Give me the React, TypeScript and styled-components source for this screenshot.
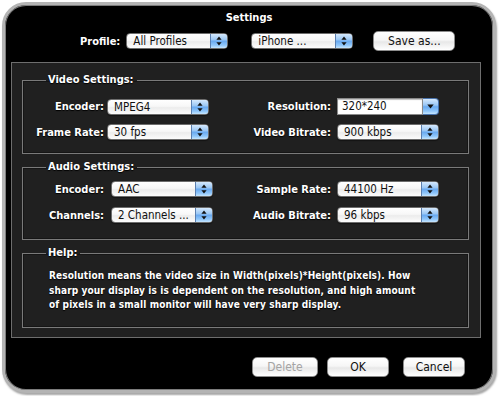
import React from 'react';
import styled, { createGlobalStyle } from 'styled-components';

const GlobalStyle = createGlobalStyle`
  html, body {
    margin: 0;
    padding: 0;
    background: #fff;
  }
  body {
    font-family: "DejaVu Sans Condensed", "DejaVu Sans", sans-serif;
    -webkit-font-smoothing: antialiased;
  }
`;

const Page = styled.div`
  width: 500px;
  height: 396px;
  padding: 2px 0 0 2px;
  box-sizing: border-box;
`;

const Window = styled.div`
  width: 494px;
  height: 391px;
  box-sizing: border-box;
  border: 3px solid #b4b4b4;
  border-radius: 24px;
  background: #000;
  box-shadow: inset 0 0 0 1px #7c7c7c, 1px 2px 2px rgba(0, 0, 0, 0.35);
  display: flex;
  flex-direction: column;
`;

const Title = styled.div`
  color: #fff;
  font-size: 11px;
  font-weight: bold;
  line-height: 13px;
  text-align: center;
  padding-top: 6px;
`;

const ProfileRow = styled.div`
  display: flex;
  align-items: center;
  height: 20px;
  margin-top: 7px;
  padding-left: 75px;
`;

const Label = styled.span<{ $pad?: number }>`
  color: #fff;
  font-size: 11px;
  font-weight: bold;
  text-align: right;
  white-space: nowrap;
  padding-right: ${({ $pad }) => $pad ?? 5}px;
  text-shadow: 0 1px 1px #000;
`;

const PopUp = styled.div<{ $w?: number; $ml?: number }>`
  width: ${({ $w }) => $w ?? 102}px;
  height: 16px;
  margin-left: ${({ $ml }) => $ml ?? 0}px;
  box-sizing: border-box;
  display: flex;
  border-radius: 4px;
  border: 1px solid #6d6d6d;
  background: linear-gradient(#ffffff 0%, #f7f7f7 45%, #ececec 55%, #fcfcfc 100%);
  box-shadow: 0 1px 1px rgba(0, 0, 0, 0.4);
  overflow: hidden;
`;

const PopText = styled.span`
  flex: 1;
  font-size: 11.5px;
  line-height: 14px;
  color: #111;
  padding-left: 6px;
  white-space: nowrap;
  overflow: hidden;
`;

const Stepper = styled.span`
  width: 16px;
  display: flex;
  align-items: center;
  justify-content: center;
  border-left: 1px solid #5a7fb0;
  background: linear-gradient(#d5e9fd 0%, #9cc8f5 40%, #6aaaf0 52%, #8fc6fa 80%, #c5e6ff 100%);
`;

const ComboField = styled.div`
  width: 102px;
  height: 17px;
  display: flex;
  box-sizing: border-box;
`;

const ComboText = styled.span`
  flex: 1;
  background: #fff;
  border: 1px solid #8a8a8a;
  box-shadow: inset 0 1px 1px rgba(0, 0, 0, 0.25);
  font-size: 11.5px;
  line-height: 15px;
  color: #111;
  padding-left: 4px;
`;

const ComboButton = styled.span`
  width: 15px;
  display: flex;
  align-items: center;
  justify-content: center;
  border: 1px solid #4a74ad;
  border-left: none;
  border-radius: 0 4px 4px 0;
  background: linear-gradient(#d5e9fd 0%, #9cc8f5 40%, #6aaaf0 52%, #8fc6fa 80%, #c5e6ff 100%);
`;

const AquaButton = styled.div<{ $w: number; $ml?: number; $disabled?: boolean }>`
  width: ${({ $w }) => $w}px;
  height: 20px;
  margin-left: ${({ $ml }) => $ml ?? 0}px;
  box-sizing: border-box;
  border: 1px solid #8c8c8c;
  border-radius: 5px;
  background: linear-gradient(#ffffff 0%, #f6f6f6 45%, #e8e8e8 55%, #ffffff 100%);
  box-shadow: 0 1px 1px rgba(0, 0, 0, 0.5);
  color: ${({ $disabled }) => ($disabled ? '#a4a4a4' : '#111')};
  font-size: 12px;
  line-height: 18px;
  text-align: center;
`;

const Panel = styled.div`
  margin: 11px 12px 0 6px;
  height: 276px;
  box-sizing: border-box;
  border: 1px solid #6e6e6e;
  background: #202020;
  padding: 11px 11px 0 10px;
  display: flex;
  flex-direction: column;
  gap: 7px;
`;

const Group = styled.fieldset`
  margin: 0;
  padding: 0;
  border: 1px solid #7a7a7a;
  box-shadow: inset 0 0 0 1px #151515;
  min-width: 0;
`;

const Legend = styled.legend`
  margin-left: 23px;
  padding: 0 3px 0 2px;
  color: #fff;
  font-size: 11px;
  font-weight: bold;
  line-height: 12px;
  text-shadow: 0 1px 1px #000;
`;

const FieldGrid = styled.div<{ $first: number; $top: number; $bottom: number; $gap: number }>`
  display: grid;
  grid-template-columns: ${({ $first }) => `${$first}px 102px ${212 - $first}px 102px`};
  row-gap: ${({ $gap }) => $gap}px;
  align-items: center;
  padding: ${({ $top, $bottom }) => `${$top}px 0 ${$bottom}px 0`};
`;

const HelpText = styled.p`
  margin: 0;
  padding: 10px 10px 14px 26px;
  color: #fff;
  font-size: 10px;
  font-weight: bold;
  letter-spacing: 0.12px;
  line-height: 14.5px;
  white-space: nowrap;
  text-shadow: 0 1px 1px #000;
`;

const ButtonRow = styled.div`
  display: flex;
  justify-content: flex-end;
  margin-top: 19px;
  padding-right: 28px;
`;

const StepArrows = () => (
  <svg width="6" height="10" viewBox="0 0 6 10">
    <path d="M3 0.5 L5.6 3.8 H0.4 Z" fill="#111" />
    <path d="M3 9.5 L5.6 6.2 H0.4 Z" fill="#111" />
  </svg>
);

const DownArrow = () => (
  <svg width="7" height="5" viewBox="0 0 7 5">
    <path d="M0.3 0.5 H6.7 L3.5 4.5 Z" fill="#111" />
  </svg>
);

const Select: React.FC<{ value: string; w?: number; ml?: number }> = ({ value, w, ml }) => (
  <PopUp $w={w} $ml={ml}>
    <PopText>{value}</PopText>
    <Stepper>
      <StepArrows />
    </Stepper>
  </PopUp>
);

const Combo: React.FC<{ value: string }> = ({ value }) => (
  <ComboField>
    <ComboText>{value}</ComboText>
    <ComboButton>
      <DownArrow />
    </ComboButton>
  </ComboField>
);

export default function App() {
  return (
    <Page>
      <GlobalStyle />
      <Window>
        <Title>Settings</Title>
        <ProfileRow>
          <Label $pad={6}>Profile:</Label>
          <Select value="All Profiles" />
          <Select value="iPhone ..." ml={23} />
          <AquaButton $w={82} $ml={20}>Save as...</AquaButton>
        </ProfileRow>

        <Panel>
          <Group>
            <Legend>Video Settings:</Legend>
            <FieldGrid $first={84} $top={12} $bottom={13} $gap={9}>
              <Label $pad={3}>Encoder:</Label>
              <Select value="MPEG4" />
              <Label $pad={6}>Resolution:</Label>
              <Combo value="320*240" />
              <Label $pad={3}>Frame Rate:</Label>
              <Select value="30 fps" />
              <Label $pad={6}>Video Bitrate:</Label>
              <Select value="900 kbps" />
            </FieldGrid>
          </Group>

          <Group>
            <Legend>Audio Settings:</Legend>
            <FieldGrid $first={88} $top={8} $bottom={16} $gap={10}>
              <Label $pad={7}>Encoder:</Label>
              <Select value="AAC" />
              <Label $pad={6}>Sample Rate:</Label>
              <Select value="44100 Hz" />
              <Label $pad={7}>Channels:</Label>
              <Select value="2 Channels ..." />
              <Label $pad={6}>Audio Bitrate:</Label>
              <Select value="96 kbps" />
            </FieldGrid>
          </Group>

          <Group>
            <Legend>Help:</Legend>
            <HelpText>
              Resolution means the video size in Width(pixels)*Height(pixels). How
              <br />
              sharp your display is is dependent on the resolution, and high amount
              <br />
              of pixels in a small monitor will have very sharp display.
            </HelpText>
          </Group>
        </Panel>

        <ButtonRow>
          <AquaButton $w={66} $disabled>Delete</AquaButton>
          <AquaButton $w={62} $ml={9}>OK</AquaButton>
          <AquaButton $w={62} $ml={14}>Cancel</AquaButton>
        </ButtonRow>
      </Window>
    </Page>
  );
}
